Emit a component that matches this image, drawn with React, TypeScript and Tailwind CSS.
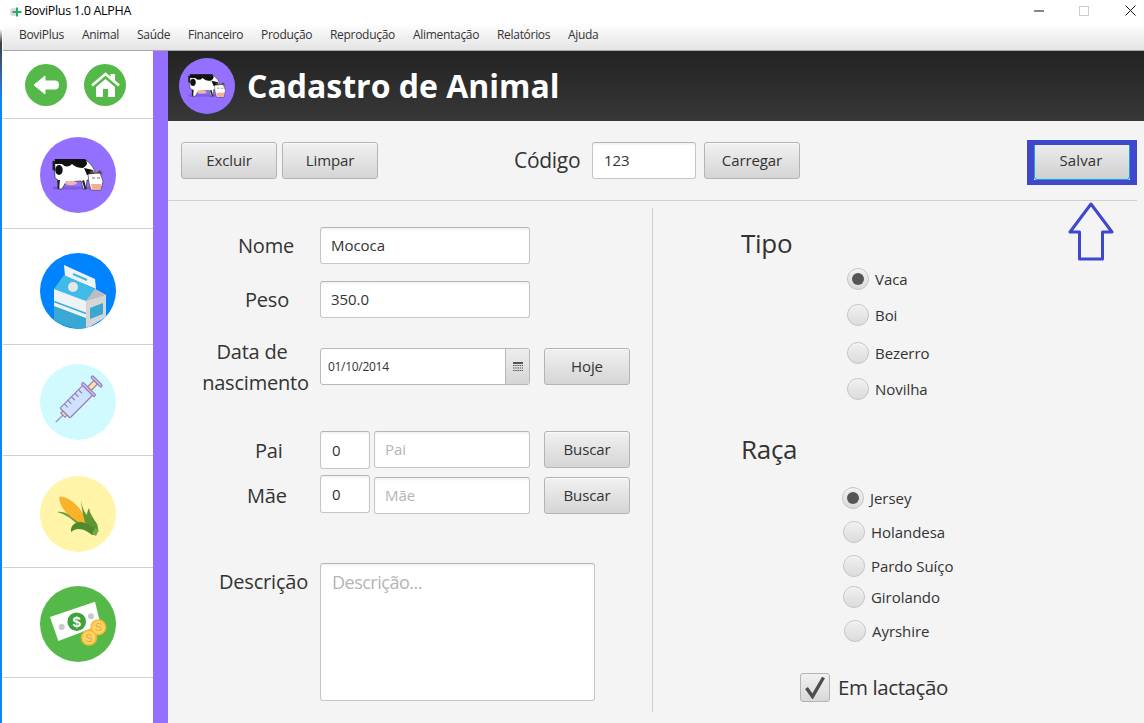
import React from "react";

const Btn = ({ w, children, h = "h-[37px]" }: { w: string; h?: string; children: React.ReactNode }) => (
  <div className={`${w} ${h} shrink-0 flex items-center justify-center rounded-[3px] border border-[#b4b4b4] bg-gradient-to-b from-[#f1f1f1] to-[#d5d5d5] shadow-[inset_0_1px_0_#fafafa] text-[15px] tracking-[-0.1px] text-[#333]`}>
    {children}
  </div>
);

const Field = ({ w, h = "h-[37px]", pl = "pl-[10px]", muted, children, extra = "" }: { w: string; h?: string; pl?: string; muted?: boolean; children: React.ReactNode; extra?: string }) => (
  <div className={`${w} ${h} ${pl} ${extra} shrink-0 flex items-center rounded-[3px] border border-[#c6c6c6] border-t-[#b4b4b4] bg-white shadow-[inset_0_2px_2px_rgba(0,0,0,0.05)] text-[15px] tracking-[-0.05px] ${muted ? "text-[#b5b5b5]" : "text-[#333]"}`}>
    {children}
  </div>
);

const Radio = ({ on }: { on?: boolean }) => (
  <span className="w-[22px] h-[22px] shrink-0 rounded-full border border-[#c4c4c4] bg-gradient-to-b from-[#f0f0f0] to-[#dcdcdc] flex items-center justify-center shadow-[inset_0_1px_0_#fafafa]">
    {on && <span className="w-[12px] h-[12px] rounded-full bg-[#555]" />}
  </span>
);

const RadioRow = ({ label, on, cls }: { label: string; on?: boolean; cls: string }) => (
  <div className={`${cls} flex items-center gap-[6px] h-[22px] text-[15px] tracking-[-0.05px] text-[#333]`}>
    <Radio on={on} />
    <span>{label}</span>
  </div>
);

const Cow = () => (
  <svg viewBox="0 0 76 76" className="w-full h-full">
    <circle cx="38" cy="38" r="38" fill="#9370ff" />
    <rect x="13" y="49.5" width="45" height="3" fill="#7c5ce0" />
    <path d="M14 23H46Q52 27 55 34L52 43H47L46 52H43L41 44L26 45L22 52H19L18 43L15 41Z" fill="#fff" stroke="#2a2a2a" strokeWidth="0.7" />
    <path d="M15 22H45Q50 27 43 31Q36 31 32 27Q27 32 22 27H15Z" fill="#111" />
    <ellipse cx="19" cy="33" rx="3.7" ry="5" fill="#111" />
    <path d="M12.5 24L15 24L15.5 34L12.5 33Z" fill="#222" />
    <path d="M44 31L53 33L54 38L47 38Z" fill="#111" />
    <path d="M20 43L19 52H17.5L17.5 43ZM44 43L46.5 52H44.5L42 44Z" fill="#222" />
    <ellipse cx="31" cy="46" rx="6" ry="2.2" fill="#f4b6a6" />
    <path d="M48 37L60 36L63 44L61 53H51L49 46Z" fill="#fff" stroke="#2a2a2a" strokeWidth="0.6" />
    <path d="M49 35L53 33L54 37ZM56 36L60 33L63 37Z" fill="#6a4b3a" />
    <path d="M51 47H61L61 52Q56 54 52 52Z" fill="#f3ae93" />
    <path d="M52 41H55M57 41H60" stroke="#444" strokeWidth="0.8" />
  </svg>
);

const Milk = () => (
  <svg viewBox="0 0 76 76" className="w-full h-full">
    <defs><clipPath id="mc"><circle cx="38" cy="38" r="38" /></clipPath></defs>
    <circle cx="38" cy="38" r="38" fill="#0083ff" />
    <g clipPath="url(#mc)">
      <path d="M24 12L55 26L56 36L25 23Z" fill="#eef3f5" />
      <path d="M33 21L47 27" stroke="#49b5dc" strokeWidth="2" />
      <path d="M14 36L24 22L55 36L46 48Z" fill="#40bbe8" />
      <circle cx="33" cy="34" r="5" fill="#e6e6e6" />
      <path d="M14 36L46 48V76L14 66Z" fill="#eef3f5" />
      <path d="M14 48.5L46 60.5" stroke="#3baed8" strokeWidth="1.7" />
      <path d="M14 53L46 65V78L14 70Z" fill="#38a9d4" />
      <path d="M46 48L55 36L66 42V64L46 76Z" fill="#d6d6d6" />
      <path d="M46 48L55 36L66 42Z" fill="#bdbdbd" />
      <path d="M50 55L63 50V61L50 66Z" fill="#3ba8cf" />
    </g>
  </svg>
);

const Syringe = () => (
  <svg viewBox="0 0 76 76" className="w-full h-full">
    <circle cx="38" cy="38" r="38" fill="#d1faff" />
    <g transform="translate(25 49) rotate(-45)" stroke="#9a7ebd" strokeWidth="1.2">
      <line x1="-13" y1="0" x2="-3" y2="0" />
      <rect x="-3" y="-3" width="3" height="6" fill="#fcdf9b" />
      <rect x="0" y="-7" width="32" height="14" rx="1" fill="#cfe2fc" />
      <path d="M6 -7V-2M11 -7V-2M16 -7V-2M21 -7V-2M26 -7V-2" fill="none" />
      <rect x="32" y="-9" width="2.5" height="18" rx="1" fill="#d8c8ea" />
      <rect x="34.5" y="-2.5" width="9" height="5" fill="#fde29b" />
      <rect x="43.5" y="-7" width="2.5" height="14" rx="1" fill="#d8c8ea" />
    </g>
  </svg>
);

const Corn = () => (
  <svg viewBox="0 0 76 76" className="w-full h-full">
    <defs>
      <pattern id="cg" width="2.6" height="2.6" patternUnits="userSpaceOnUse" patternTransform="rotate(40)">
        <rect width="2.6" height="2.6" fill="#fdba2c" />
        <path d="M0 0H2.6M0 0V2.6" stroke="#ee9420" strokeWidth="0.6" />
      </pattern>
    </defs>
    <circle cx="38" cy="38" r="38" fill="#fff4a8" />
    <path d="M17 36C25 35 33 40 42 48L38 49C32 43 25 38 17 36Z" fill="#6f9e3a" />
    <path d="M19.5 21C30 20 45 35 47 50C35 45 20 35 19.5 21Z" fill="url(#cg)" stroke="#e9a52a" strokeWidth="0.5" />
    <path d="M41 24C42 31 44 36 47 39C47 36 48 34 49 32C50 38 53 41 55 45C58 48 58 52 58 53L50 57C46 52 42 38 41 24Z" fill="#5d9632" />
    <path d="M31 56C30 48 38 44 45 47C50 49 54 52 58 53L56 59L52 59C46 54 38 50 31 56Z" fill="#4f8a2d" />
    <path d="M55 52L59 54L56 60L52 58Z" fill="#77a94a" />
  </svg>
);

const Money = () => (
  <svg viewBox="0 0 76 76" className="w-full h-full">
    <circle cx="38" cy="38" r="38" fill="#54b948" />
    <path d="M10 31L55 15.7L60.7 39L18.3 55Z" fill="#fff" />
    <circle cx="36.7" cy="35.7" r="9.3" fill="#3ea33a" />
    <text x="36.7" y="41" textAnchor="middle" fontSize="15" fontWeight="700" fill="#fff" fontFamily="Liberation Sans, sans-serif">$</text>
    <circle cx="21.7" cy="41" r="3" fill="#c9c9c9" />
    <circle cx="51" cy="30.3" r="3" fill="#c9c9c9" />
    <circle cx="58.3" cy="41.3" r="7.3" fill="#fdd36b" stroke="#fbb92d" strokeWidth="1.6" />
    <text x="58.3" y="45.3" textAnchor="middle" fontSize="11" fill="#eaa93a" fontFamily="Liberation Sans, sans-serif">S</text>
    <circle cx="49" cy="51.7" r="7.3" fill="#fdd36b" stroke="#fbb92d" strokeWidth="1.6" />
    <text x="49" y="55.7" textAnchor="middle" fontSize="11" fill="#eaa93a" fontFamily="Liberation Sans, sans-serif">S</text>
  </svg>
);

const menu: [string, string][] = [
  ["BoviPlus", "w-[63px]"],
  ["Animal", "w-[55px]"],
  ["Saúde", "w-[51px]"],
  ["Financeiro", "w-[73px]"],
  ["Produção", "w-[69px]"],
  ["Reprodução", "w-[83px]"],
  ["Alimentação", "w-[84px]"],
  ["Relatórios", "w-[71px]"],
  ["Ajuda", "w-[40px]"],
];

const sections: [string, React.ReactNode][] = [
  ["h-[110px] pt-[18px]", <Cow />],
  ["h-[116px] pt-[24px]", <Milk />],
  ["h-[111px] pt-[19px]", <Syringe />],
  ["h-[112px] pt-[20px]", <Corn />],
  ["h-[110px] pt-[18px]", <Money />],
];

export default function App() {
  return (
    <div className="relative w-[1144px] h-[723px] overflow-hidden flex bg-white [font-family:'Open_Sans',sans-serif] text-[#333]">
      <div className="w-[3px] h-full shrink-0 border-r border-white bg-gradient-to-b from-white from-[4%] via-[#3a3f46] via-[6%] to-[#0a84ff] to-[14%]" />
      <div className="flex-1 min-w-0 flex flex-col">
        {/* Title bar */}
        <div className="h-[23px] shrink-0 flex items-center bg-white">
          <svg viewBox="0 0 14 14" className="w-[14px] h-[14px] ml-[6px]">
            <circle cx="5" cy="7" r="4" fill="#d9d9d9" />
            <path d="M8 2.5V11.5M3.5 7H12.5" stroke="#22b060" strokeWidth="2" />
          </svg>
          <span className="ml-[1px] text-[12.5px] tracking-[-0.3px] text-black">BoviPlus 1.0 ALPHA</span>
          <div className="ml-auto flex items-center">
            <svg viewBox="0 0 10 10" className="w-[10px] h-[10px] mr-[35px] -mt-[2px]"><path d="M0 5H10" stroke="#111" /></svg>
            <svg viewBox="0 0 10 10" className="w-[10px] h-[10px] mr-[36px] -mt-[2px]"><rect x="0.5" y="0.5" width="9" height="9" fill="none" stroke="#ccc" /></svg>
            <svg viewBox="0 0 11 11" className="w-[11px] h-[11px] mr-[8px] -mt-[2px]"><path d="M0.5 0.5L10.5 10.5M10.5 0.5L0.5 10.5" stroke="#111" /></svg>
          </div>
        </div>
        {/* Menu bar */}
        <div className="h-[28px] shrink-0 flex items-center pl-[16px] pb-[4px] bg-gradient-to-b from-white to-[#e4e4e4] border-b border-[#a9a9a9] text-[12px] tracking-[-0.3px] text-[#333]">
          {menu.map(([t, w]) => (
            <span key={t} className={`${w} shrink-0`}>{t}</span>
          ))}
        </div>
        <div className="flex-1 min-h-0 flex">
          {/* Sidebar */}
          <div className="w-[150px] shrink-0 flex flex-col bg-white">
            <div className="h-[68px] flex gap-[17px] pl-[22px] pt-[13px] border-b border-[#cfcfcf]">
              <svg viewBox="0 0 42 42" className="w-[42px] h-[42px]">
                <circle cx="21" cy="21" r="21" fill="#54b948" />
                <path d="M9 21L20 12V17H31Q33.5 17 33.5 21Q33.5 25 31 25H20V30Z" fill="#fff" stroke="#fff" strokeLinejoin="round" />
              </svg>
              <svg viewBox="0 0 42 42" className="w-[42px] h-[42px]">
                <circle cx="21" cy="21" r="21" fill="#54b948" />
                <path d="M26.5 10H31V17L26.5 14Z" fill="#fff" />
                <path d="M8 21.5L21.5 10L35 21.5" fill="none" stroke="#fff" strokeWidth="2.6" />
                <path d="M12 23L21.5 15L31 23V33H24V25H19V33H12Z" fill="#fff" />
              </svg>
            </div>
            {sections.map(([cls, icon], i) => (
              <div key={i} className={`${cls} flex justify-center border-b border-[#cfcfcf]`}>
                <div className="w-[76px] h-[76px]">{icon}</div>
              </div>
            ))}
          </div>
          <div className="w-[15px] shrink-0 bg-[#9370ff]" />
          {/* Main */}
          <div className="flex-1 min-w-0 flex flex-col bg-[#f4f4f4] relative">
            <div className="h-[70px] shrink-0 flex items-center pl-[11px] bg-gradient-to-b from-[#232323] to-[#383838]">
              <div className="w-[56px] h-[56px]"><Cow /></div>
              <span className="ml-[12px] text-[32px] font-bold text-white">Cadastro de Animal</span>
            </div>
            {/* Toolbar */}
            <div className="h-[80px] shrink-0 mr-[7px] flex items-start pl-[13px] pt-[21px] border-b border-[#cfcfcf]">
              <Btn w="w-[96px]">Excluir</Btn>
              <div className="ml-[5px]"><Btn w="w-[96px]">Limpar</Btn></div>
              <div className="ml-[136px] w-[67px] h-[37px] flex items-center text-[21px] tracking-[-0.3px]">Código</div>
              <div className="ml-[11px]"><Field w="w-[104px]" pl="pl-[11px]">123</Field></div>
              <div className="ml-[8px]"><Btn w="w-[96px]">Carregar</Btn></div>
              <div className="ml-auto -mt-[2px] w-[110px] h-[45px] border-x-[7px] border-y-[5px] border-[#3f48cc]">
                <div className="h-full flex items-center justify-center pb-[3px] pr-[2px] rounded-b-[3px] border-x border-b border-[#11a8dc] bg-gradient-to-b from-[#ececec] to-[#cfcfcf] text-[15px] tracking-[0.1px]">Salvar</div>
              </div>
            </div>
            {/* Annotation arrow */}
            <svg viewBox="0 0 48 60" className="absolute left-[899px] top-[150px] w-[48px] h-[60px]">
              <path d="M24 3L3 31H12.5V58H35.5V31H45Z" fill="none" stroke="#3f48cc" strokeWidth="3" strokeLinejoin="round" />
            </svg>
            {/* Form */}
            <div className="flex-1 min-h-0 flex">
              <div className="w-[484px] shrink-0 flex flex-col text-[20px] tracking-[-0.2px]">
                <div className="mt-[26px] flex items-center">
                  <div className="w-[152px] shrink-0 pl-[70px]">Nome</div>
                  <Field w="w-[210px]">Mococa</Field>
                </div>
                <div className="mt-[17px] flex items-center">
                  <div className="w-[152px] shrink-0 pl-[77px]">Peso</div>
                  <Field w="w-[210px]">350.0</Field>
                </div>
                <div className="mt-[30px] h-[37px] flex items-center">
                  <div className="w-[152px] shrink-0 pl-[34px]">
                    <div className="w-[107px] text-center leading-[31px] whitespace-nowrap"><span className="inline-block mr-[7px]">Data de</span><br /><span className="-mx-[4px]">nascimento</span></div>
                  </div>
                  <div className="w-[210px] h-[37px] shrink-0 flex rounded-[3px] border border-[#b8b8b8] bg-white overflow-hidden">
                    <div className="flex-1 flex items-center pl-[7px] text-[12px] tracking-[-0.3px]">01/10/2014</div>
                    <div className="w-[24px] flex items-center justify-center border-l border-[#b8b8b8] bg-gradient-to-b from-[#eeeeee] to-[#d5d5d5]">
                      <svg viewBox="0 0 10 10" className="w-[10px] h-[10px]">
                        <rect width="10" height="2" fill="#555" />
                        <path d="M0 3.5H10M0 6H10M0 8.5H10" stroke="#555" strokeWidth="1.2" strokeDasharray="1.5 0.7" />
                      </svg>
                    </div>
                  </div>
                  <div className="ml-[14px]"><Btn w="w-[86px]">Hoje</Btn></div>
                </div>
                <div className="mt-[46px] flex items-start">
                  <div className="w-[152px] shrink-0 pl-[87px] mt-[5px]">Pai</div>
                  <Field w="w-[50px]" h="h-[38px]" pl="pl-[11px]">0</Field>
                  <div className="ml-[4px]"><Field w="w-[156px]" muted>Pai</Field></div>
                  <div className="ml-[14px]"><Btn w="w-[86px]">Buscar</Btn></div>
                </div>
                <div className="mt-[6px] flex items-start">
                  <div className="w-[152px] shrink-0 pl-[79px] mt-[6px]">Mãe</div>
                  <Field w="w-[50px]" h="h-[38px]" pl="pl-[11px]">0</Field>
                  <div className="ml-[4px] mt-[2px]"><Field w="w-[156px]" muted>Mãe</Field></div>
                  <div className="ml-[14px] mt-[2px]"><Btn w="w-[86px]">Buscar</Btn></div>
                </div>
                <div className="mt-[49px] flex items-start">
                  <div className="w-[152px] shrink-0 pl-[51px] mt-[4px]">Descrição</div>
                  <div className="w-[275px] h-[138px] shrink-0 rounded-[3px] border border-[#c6c6c6] border-t-[#b4b4b4] bg-white pl-[11px] pt-[5px] text-[18px] tracking-[-0.5px] text-[#b5b5b5] shadow-[inset_0_2px_2px_rgba(0,0,0,0.05)]">Descrição...</div>
                </div>
              </div>
              <div className="w-px mt-[7px] mb-[11px] shrink-0 bg-[#cfcfcf]" />
              <div className="flex-1 min-w-0 flex flex-col">
                <div className="mt-[26px] pl-[88px] h-[32px] flex items-center text-[26px] tracking-[-0.3px]">Tipo</div>
                <RadioRow cls="mt-[9px] ml-[194px]" label="Vaca" on />
                <RadioRow cls="mt-[14px] ml-[194px]" label="Boi" />
                <RadioRow cls="mt-[16px] ml-[194px]" label="Bezerro" />
                <RadioRow cls="mt-[14px] ml-[194px]" label="Novilha" />
                <div className="mt-[33px] pl-[88px] h-[32px] flex items-center text-[26px] tracking-[-0.3px]">Raça</div>
                <RadioRow cls="mt-[22px] ml-[189px]" label="Jersey" on />
                <RadioRow cls="mt-[12px] ml-[190px]" label="Holandesa" />
                <RadioRow cls="mt-[12px] ml-[190px]" label="Pardo Suíço" />
                <RadioRow cls="mt-[9px] ml-[190px]" label="Girolando" />
                <RadioRow cls="mt-[12px] ml-[191px]" label="Ayrshire" />
                <div className="mt-[30px] ml-[147px] flex items-center gap-[8px] text-[20.5px] tracking-[-0.4px]">
                  <div className="w-[30px] h-[29px] rounded-[3px] border border-[#b4b4b4] bg-gradient-to-b from-[#f1f1f1] to-[#d8d8d8] flex items-center justify-center">
                    <svg viewBox="0 0 24 24" className="w-[24px] h-[24px]">
                      <path d="M3.5 13L9.5 21.5L20.5 2.5" fill="none" stroke="#4d4d4d" strokeWidth="3.4" />
                    </svg>
                  </div>
                  <span>Em lactação</span>
                </div>
              </div>
            </div>
          </div>
        </div>
      </div>
    </div>
  );
}
